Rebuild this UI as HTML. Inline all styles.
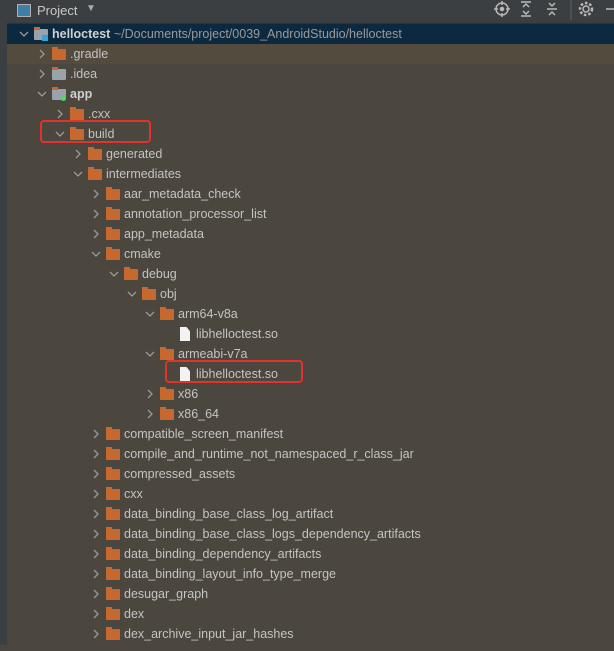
<!DOCTYPE html><html><head><style>
body{margin:0;width:614px;height:645px;overflow:hidden;background:#4b463e;font-family:"Liberation Sans",sans-serif;font-size:12.5px;color:#c4c4c4;position:relative}
.hdr{position:absolute;left:0;top:0;width:614px;height:23px;background:#3c3f41;border-bottom:1px solid #2f3132}
.strip{position:absolute;left:0;top:23px;width:7px;height:622px;background:#3c3f41}
.row{position:absolute;left:7px;width:607px;height:20px;line-height:20px;white-space:nowrap}
.ar{position:absolute;top:0;width:10px;height:20px;color:#9a9a9a;font-size:11px}
.fo{position:absolute;top:5px;width:14px;height:11px;background:#c7682f;border-radius:1px}
.fo:before{content:"";position:absolute;left:0;top:-2px;width:6px;height:3px;background:#c7682f}
.fi{position:absolute;top:3px;width:10px;height:14px;background:#f2f2f2;clip-path:polygon(0 0,65% 0,100% 30%,100% 100%,0 100%)}
.t{position:absolute;top:0}
.red{position:absolute;border:2.5px solid #e0332b;border-radius:4px}
</style></head><body>
<div class="hdr">
<div style="position:absolute;left:17px;top:4px;width:12px;height:11px;border:1.5px solid #b0b0b0;background:#3f7fa8"></div>
<div style="position:absolute;left:37px;top:3px;color:#c8c8c8;font-size:13px">Project</div>
<div style="position:absolute;left:86px;top:3px;color:#aaa;font-size:10px">▼</div>
<svg style="position:absolute;left:492px;top:0" width="122" height="20" viewBox="0 0 122 20" fill="none" stroke="#b8b8b8" stroke-width="1.5">
<circle cx="10" cy="9" r="6"/><circle cx="10" cy="9" r="1.5" fill="#b8b8b8"/><path d="M10 1v4M10 13v4M2 9h4M14 9h4"/>
<path d="M29 2h10M29 16h10M31 7l3-3 3 3M31 11l3 3 3-3"/>
<path d="M55 9h10M57 3l3 3 3-3M57 15l3-3 3 3"/>
<path d="M79 0v20" stroke="#555"/>
<circle cx="94" cy="9" r="3"/><circle cx="94" cy="9" r="6" stroke-dasharray="2.5 2" stroke-width="2.5"/>
<path d="M114 9h8"/></svg>
</div>
<div class="strip"></div>
<div style="position:absolute;left:7px;top:24px;width:607px;height:20px;background:#0d2940"></div>
<div style="position:absolute;left:7px;top:44px;width:607px;height:20px;background:#534c3e"></div>
<div id="tree"></div>
<div class="red" style="left:40px;top:120px;width:107px;height:19px"></div>
<div class="red" style="left:165px;top:360px;width:134px;height:19px"></div>
<script>
var rows=[[0,"v","proj","helloctest"],[1,">","f",".gradle"],[1,">","g",".idea"],[1,"v","app","app"],[2,">","f",".cxx"],[2,"v","f","build"],[3,">","f","generated"],[3,"v","f","intermediates"],[4,">","f","aar_metadata_check"],[4,">","f","annotation_processor_list"],[4,">","f","app_metadata"],[4,"v","f","cmake"],[5,"v","f","debug"],[6,"v","f","obj"],[7,"v","f","arm64-v8a"],[8,"","fi","libhelloctest.so"],[7,"v","f","armeabi-v7a"],[8,"","fi","libhelloctest.so"],[7,">","f","x86"],[7,">","f","x86_64"],[4,">","f","compatible_screen_manifest"],[4,">","f","compile_and_runtime_not_namespaced_r_class_jar"],[4,">","f","compressed_assets"],[4,">","f","cxx"],[4,">","f","data_binding_base_class_log_artifact"],[4,">","f","data_binding_base_class_logs_dependency_artifacts"],[4,">","f","data_binding_dependency_artifacts"],[4,">","f","data_binding_layout_info_type_merge"],[4,">","f","desugar_graph"],[4,">","f","dex"],[4,">","f","dex_archive_input_jar_hashes"]];
var h="";rows.forEach(function(r,i){var y=24+i*20,l=r[0],ax=12+l*18,ix=ax+15,tx=ix+18;
h+='<div class="row" style="top:'+y+'px">';
if(r[1])h+='<div class="ar" style="left:'+ax+'px">'+(r[1]=="v"?'<svg width="10" height="20"><path d="M1 8l4 4 4-4" stroke="#9a9a9a" stroke-width="1.3" fill="none"/></svg>':'<svg width="10" height="20"><path d="M3 6l4 4-4 4" stroke="#9a9a9a" stroke-width="1.3" fill="none"/></svg>')+'</div>';
var c=r[2];
if(c=="f")h+='<div class="fo" style="left:'+ix+'px"></div>';
else if(c=="g"||c=="proj"||c=="app")h+='<div class="fo" style="left:'+ix+'px;background:#9aa3ab"></div>'+(c=="proj"?'<div style="position:absolute;left:'+(ix+8)+'px;top:11px;width:6px;height:6px;background:#3aa0d8"></div>':'')+(c=="app"?'<div style="position:absolute;left:'+(ix+9)+'px;top:12px;width:5px;height:5px;border-radius:50%;background:#4cd964"></div>':'');
else if(c=="fi")h+='<div class="fi" style="left:'+(ix+2)+'px"></div>';
var st=(c=="proj"||c=="app")?'font-weight:bold;color:#d0d0d0':'';
var extra=c=="proj"?' <span style="font-weight:normal;color:#9a9a9a">~/Documents/project/0039_AndroidStudio/helloctest</span>':'';
h+='<div class="t" style="left:'+tx+'px;'+st+'">'+r[3]+extra+'</div></div>';});
document.getElementById("tree").innerHTML=h;
</script>
</body></html>
